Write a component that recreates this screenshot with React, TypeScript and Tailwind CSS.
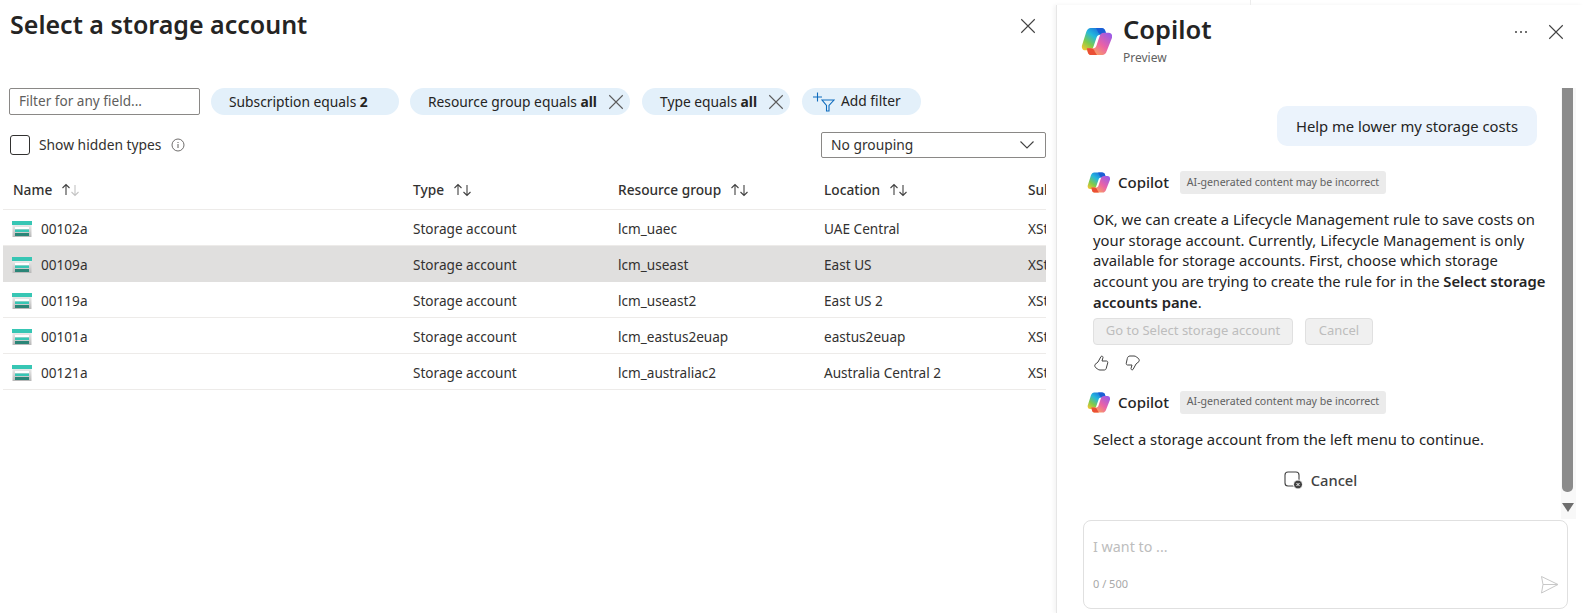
import React from "react";

const font = { fontFamily: '"Noto Sans", sans-serif' };

function Close({ size = 16, color = "#424242" }: { size?: number; color?: string }) {
  return (
    <svg width={size} height={size} viewBox="0 0 16 16" fill="none" stroke={color} strokeWidth="1">
      <path d="M2 2 14 14M14 2 2 14" />
    </svg>
  );
}

function Sort({ dim = false }: { dim?: boolean }) {
  return (
    <svg width="20" height="14" viewBox="0 0 20 14" fill="none" strokeWidth="1.1">
      <path d="M5 12V2M1.5 5 5 1.5 8.500 5" stroke="#424242" />
      <path d="M14 2v10M10.500 9 14 12.500 17.500 9" stroke={dim ? "#c4c4c4" : "#424242"} />
    </svg>
  );
}

function StorageIcon() {
  return (
    <svg width="20" height="16" viewBox="0 0 20 16" className="shrink-0">
      <defs>
        <linearGradient id="sg" x1="0" y1="0" x2="0" y2="1">
          <stop offset="0" stopColor="#f2f2f2" />
          <stop offset="1" stopColor="#b8b8b8" />
        </linearGradient>
      </defs>
      <rect x="0.500" y="2" width="19" height="14" fill="url(#sg)" />
      <rect x="0" y="0" width="20" height="4" fill="#37c6b4" />
      <rect x="3" y="6" width="14" height="2" fill="#ffffff" />
      <rect x="3" y="8.500" width="14" height="2.500" fill="#37c6b4" />
      <rect x="3" y="12" width="14" height="3" fill="#2a8577" />
    </svg>
  );
}

function CopilotLogo({ size, id }: { size: number; id: string }) {
  return (
    <svg width={size} height={size} viewBox="0 0 32 32" className="shrink-0">
      <defs>
        <linearGradient id={`${id}a`} gradientUnits="userSpaceOnUse" x1="3" y1="25" x2="20" y2="2">
          <stop offset="0" stopColor="#f7c531" />
          <stop offset="0.3" stopColor="#7fcb4b" />
          <stop offset="0.62" stopColor="#25b8dc" />
          <stop offset="1" stopColor="#1a66dc" />
        </linearGradient>
        <linearGradient id={`${id}b`} gradientUnits="userSpaceOnUse" x1="30" y1="8" x2="12" y2="30">
          <stop offset="0" stopColor="#9a5be8" />
          <stop offset="0.5" stopColor="#ea62a6" />
          <stop offset="1" stopColor="#fdab55" />
        </linearGradient>
      </defs>
      <path d="M10 2h11c2 0 3.500 1 4 3l1 4h-6c-2 0-3.500 1-4 3l-3 9c-.8 2.500-2 4-5 4H4.500c-3 0-4-2.500-3.500-5L5.500 6C6.300 3.500 8 2 10 2Z" fill={`url(#${id}a)`} />
      <path d="M15.500 2H21c2 0 3.500 1 4 3l1 4h-4c-2.500 0-4-1-4.800-3.500Z" fill="#1a5fd6" />
      <path d="M22 30H11c-2 0-3.500-1-4-3l-1-4h6c2 0 3.500-1 4-3l3-9c.8-2.500 2-4 5-4h4.500c3 0 4 2.500 3.500 5L26.500 26c-.8 2.500-2.500 4-4.500 4Z" fill={`url(#${id}b)`} />
      <path d="M16.500 30H11c-2 0-3.500-1-4-3l-1-4h3.500c2.500 0 4 1 4.800 3.500Z" fill="#ea4f36" />
    </svg>
  );
}

function Chip({ children, w, close }: { children: React.ReactNode; w: string; close?: boolean }) {
  return (
    <div className={`${w} h-[27px] shrink-0 rounded-full bg-[#e3f0fa] flex items-center pl-[18px] pr-[5px] justify-between text-[13.800px] text-[#252423] whitespace-nowrap`}>
      <span className="pt-[1px]">{children}</span>
      {close && <Close size={18} color="#5c5c5c" />}
    </div>
  );
}

function ColHead({ label, dim }: { label: string; dim?: boolean }) {
  return (
    <div className="flex items-center gap-[9px] font-medium text-[13.700px] text-[#323130] whitespace-nowrap">
      <span>{label}</span>
      <Sort dim={dim} />
    </div>
  );
}

const rows = [
  ["00102a", "lcm_uaec", "UAE Central"],
  ["00109a", "lcm_useast", "East US"],
  ["00119a", "lcm_useast2", "East US 2"],
  ["00101a", "lcm_eastus2euap", "eastus2euap"],
  ["00121a", "lcm_australiac2", "Australia Central 2"],
];

const gridCols = "grid grid-cols-[400px_205px_206px_204px_100px]";

function CopilotRow({ id }: { id: string }) {
  return (
    <div className="flex items-center h-[23px] pl-[3px]">
      <CopilotLogo size={23} id={id} />
      <span className="ml-[8px] text-[15px] font-medium text-[#242424]">Copilot</span>
      <span className="ml-[11px] h-[23px] w-[206px] rounded-[3px] bg-[#ebebeb] flex items-center justify-center text-[10.600px] text-[#616161] whitespace-nowrap">
        AI-generated content may be incorrect
      </span>
    </div>
  );
}

export default function App() {
  return (
    <div style={font} className="relative w-[1583px] h-[613px] flex overflow-hidden bg-white text-[#323130]">
      <div className="absolute left-[1250px] top-0 h-[5px] w-px bg-[#ececec]" />
      <div className="w-[1056px] shrink-0 flex flex-col pr-[10px]">
        <div className="h-[88px] flex justify-between items-start pl-[10px] pr-[9px]">
          <h1 className="text-[25px] leading-[32px] font-semibold text-[#252423] mt-[8px]">Select a storage account</h1>
          <div className="mt-[17px]"><Close size={18} /></div>
        </div>

        <div className="flex items-center pl-[9px]">
          <div className="w-[191px] h-[27px] shrink-0 rounded-[2px] border border-[#8a8886] pl-[9px] flex items-center text-[13.600px] text-[#605e5c]">
            Filter for any field...
          </div>
          <div className="ml-[11px]"><Chip w="w-[188px]">Subscription equals <b>2</b></Chip></div>
          <div className="ml-[11px]"><Chip w="w-[220px]" close>Resource group equals <b>all</b></Chip></div>
          <div className="ml-[12px]"><Chip w="w-[148px]" close>Type equals <b>all</b></Chip></div>
          <div className="ml-[12px] w-[119px] h-[27px] rounded-full bg-[#e3f0fa] flex items-center pl-[11px] gap-[6px] text-[13.800px] text-[#252423]">
            <svg width="22" height="20" viewBox="0 0 22 20" fill="none" stroke="#0f6cbd" strokeWidth="1.100">
              <path d="M0 5h9M4.500 .5v9" />
              <path d="M9 8h12l-5 5.500V19h-2.500v-5.500Z" />
            </svg>
            <span>Add filter</span>
          </div>
        </div>

        <div className="mt-[17px] h-[26px] flex items-center justify-between pl-[10px]">
          <div className="flex items-center">
            <div className="w-[20px] h-[20px] rounded-[3px] border border-[#323130]" />
            <span className="ml-[9px] text-[13.800px]">Show hidden types</span>
            <svg className="ml-[10px]" width="14" height="14" viewBox="0 0 14 14" fill="none" stroke="#605e5c">
              <circle cx="7" cy="7" r="6" strokeWidth="0.900" />
              <path d="M7 6v4M7 4v1" strokeWidth="1" />
            </svg>
          </div>
          <div className="w-[225px] h-[26px] rounded-[2px] border border-[#8a8886] flex items-center justify-between pl-[9px] pr-[10px] text-[13.800px]">
            <span>No grouping</span>
            <svg width="16" height="10" viewBox="0 0 16 10" fill="none" stroke="#424242" strokeWidth="1.100">
              <path d="M1.500 1.500 8 8l6.500-6.500" />
            </svg>
          </div>
        </div>

        <div className="ml-[3px] w-[1043px] overflow-hidden mt-[16px]">
          <div className={`${gridCols} h-[36px] items-center border-b border-[#edebe9] pl-[10px] pb-[3px]`}>
            <ColHead label="Name" dim />
            <ColHead label="Type" />
            <ColHead label="Resource group" />
            <ColHead label="Location" />
            <div className="font-medium text-[13.700px] whitespace-nowrap">Subscription</div>
          </div>
          {rows.map((r, i) => (
            <div
              key={r[0]}
              className={`${gridCols} h-[36px] items-center pl-[10px] pt-[3px] text-[13.600px] border-b whitespace-nowrap ${i === 1 ? "bg-[#e0dfde] border-[#e0dfde]" : "border-[#edebe9]"}`}
            >
              <div className="flex items-center gap-[9px] -ml-[1px]">
                <StorageIcon />
                <span>{r[0]}</span>
              </div>
              <div>Storage account</div>
              <div>{r[1]}</div>
              <div>{r[2]}</div>
              <div>XStore</div>
            </div>
          ))}
        </div>
      </div>

      <div className="w-[527px] shrink-0 mt-[5px] border-l border-[#e6e6e6] shadow-[-2px_0_4px_rgba(0,0,0,0.05)] flex flex-col">
        <div className="h-[83px] shrink-0 flex justify-between items-start pl-[24px] pr-[18px]">
          <div className="flex">
            <div className="mt-[21px]"><CopilotLogo size={31} id="h" /></div>
            <div className="ml-[11px] mt-[6px]">
              <div className="text-[25.500px] leading-[36px] font-semibold text-[#242424]">Copilot</div>
              <div className="text-[12px] leading-[16px] text-[#616161] mt-[3px]">Preview</div>
            </div>
          </div>
          <div className="flex items-center gap-[20px] mt-[18px]">
            <span className="flex gap-[3px]">
              <i className="w-[2px] h-[2px] rounded-full bg-[#424242]" />
              <i className="w-[2px] h-[2px] rounded-full bg-[#424242]" />
              <i className="w-[2px] h-[2px] rounded-full bg-[#424242]" />
            </span>
            <Close size={18} />
          </div>
        </div>

        <div className="flex-1 min-h-0 flex">
          <div className="flex-1 min-w-0 pl-[27px] flex flex-col">
            <div className="flex justify-end pr-[24px] mt-[18px]">
              <div className="w-[260px] h-[40px] rounded-[10px] bg-[#ebf3fc] flex items-center justify-center text-[14.800px] text-[#242424]">
                Help me lower my storage costs
              </div>
            </div>
            <div className="mt-[25px]"><CopilotRow id="a" /></div>
            <p className="mt-[15px] pl-[9px] text-[14.800px] leading-[20.700px] text-[#242424] whitespace-nowrap">
              OK, we can create a Lifecycle Management rule to save costs on<br />
              your storage account. Currently, Lifecycle Management is only<br />
              available for storage accounts. First, choose which storage<br />
              account you are trying to create the rule for in the <b className="font-semibold">Select storage</b><br />
              <b className="font-semibold">accounts pane</b>.
            </p>
            <div className="flex gap-[12px] pl-[9px] mt-[5px]">
              {[["w-[200px]", "Go to Select storage account"], ["w-[68px]", "Cancel"]].map(([w, t]) => (
                <div key={t} className={`${w} h-[27px] rounded-[4px] bg-[#f0f0f0] border border-[#e0e0e0] flex items-center justify-center text-[13px] text-[#bdbdbd]`}>{t}</div>
              ))}
            </div>
            <div className="flex gap-[16px] pl-[10px] mt-[10px] h-[16px]">
              <svg width="15" height="16" viewBox="0 0 15 16" fill="none" stroke="#424242" strokeWidth="1">
                <path d="M1 9.500 4 7l3-5.500c1-.8 2-.2 2 1L8 6h4.500c1 0 1.500 1 1.200 2l-1.500 5.500c-.3 1-1 1.500-2 1.500H6c-1 0-1.500-.3-2.200-.8L1.500 12.500c-.8-1-.9-2.200-.5-3Z" />
              </svg>
              <svg width="15" height="16" viewBox="0 0 15 16" fill="none" stroke="#424242" strokeWidth="1">
                <path d="M14 6.500 11 9l-3 5.500c-1 .8-2 .2-2-1L7 10H2.500c-1 0-1.500-1-1.200-2l1-4.500C2.600 2 3.500 1 5 1h4c1 0 1.500.3 2.200.8l2.300 1.700c.8 1 .9 2.200.5 3Z" />
              </svg>
            </div>
            <div className="mt-[20px]"><CopilotRow id="b" /></div>
            <p className="mt-[15px] pl-[9px] text-[14.800px] leading-[20px] text-[#242424]">Select a storage account from the left menu to continue.</p>
            <div className="mt-[20px] flex items-center justify-center gap-[8px] pr-[4px] text-[14.700px] font-medium text-[#424242]">
              <svg width="19" height="18" viewBox="0 0 19 18" fill="none">
                <rect x="1" y="1" width="14" height="14" rx="3" stroke="#424242" strokeWidth="1.100" />
                <circle cx="14" cy="13.500" r="4.500" fill="#424242" stroke="#fff" />
                <path d="M12.500 12l3 3M15.500 12l-3 3" stroke="#fff" />
              </svg>
              <span>Cancel</span>
            </div>
          </div>
          <div className="w-[15px] mr-[7px] shrink-0 h-[431px] bg-[#f8f8f8] pl-[1px] pr-[3px] flex flex-col items-center">
            <div className="w-[11px] h-[404px] rounded-b-[5px] bg-[#8b8b8b]" />
            <svg className="mt-[11px]" width="12" height="10" viewBox="0 0 12 10"><path d="M0 0h12L6 9Z" fill="#6e6e6e" /></svg>
          </div>
        </div>

        <div className="ml-[26px] mr-[15px] mb-[4px] h-[89px] shrink-0 rounded-[8px] border border-[#e0e0e0] pl-[9px] pr-[8px] flex flex-col">
          <div className="mt-[16px] text-[14.300px] leading-[20px] text-[#bdbdbd]">I want to ...</div>
          <div className="mt-[18px] flex items-center justify-between">
            <span className="text-[11px] text-[#a8a8a8]">0 / 500</span>
            <svg width="19" height="19" viewBox="0 0 19 19" fill="none" stroke="#c8c8c8" strokeWidth="1">
              <path d="M1.500 1.500 18 9.500 1.500 18 3 9.500ZM3 9.500h15" />
            </svg>
          </div>
        </div>
      </div>
    </div>
  );
}
